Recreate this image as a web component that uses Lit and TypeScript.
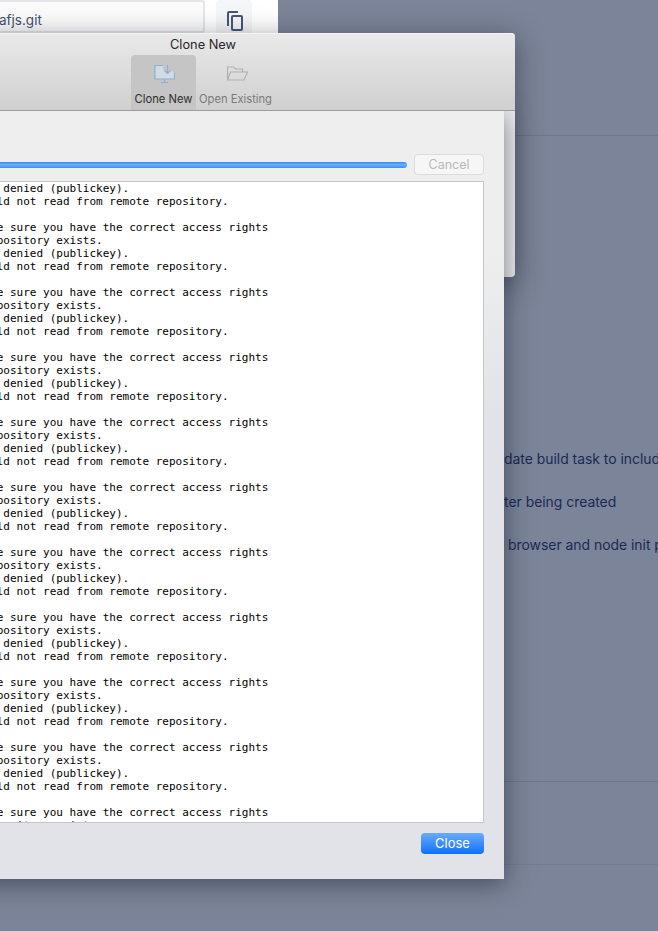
import { LitElement, html, css } from "lit";
import { customElement } from "lit/decorators.js";

const BLOCK = [
  "Please make sure you have the correct access rights",
  "and the repository exists.",
  "Permission denied (publickey).",
  "fatal: Could not read from remote repository.",
  "",
];
const LOG = [
  "Permission denied (publickey).",
  "fatal: Could not read from remote repository.",
  "",
  ...Array.from({ length: 10 }, () => BLOCK).flat(),
].join("\n");

@customElement("app-root")
export class AppRoot extends LitElement {
  static styles = css`
    :host {
      display: block;
      position: relative;
      width: 658px;
      height: 931px;
      overflow: hidden;
      background: #7b8498;
      font-family: "Inter", "Liberation Sans", sans-serif;
    }
    .page {
      display: flex;
      flex-direction: column;
      height: 931px;
    }
    .top {
      height: 33px;
      flex: none;
      box-sizing: border-box;
      background: #fff;
      display: flex;
      gap: 11px;
      margin-left: -20px;
      width: 298px;
    }
    .input {
      width: 225px;
      height: 33px;
      box-sizing: border-box;
      border: 2px solid #e4e6ea;
      border-radius: 3px;
      background: #fbfbfb;
      color: #42506e;
      font-size: 13.5px;
      line-height: 36px;
      padding-left: 17px;
      white-space: nowrap;
      overflow: hidden;
    }
    .copy {
      width: 36px;
      height: 33px;
      border-radius: 4px 4px 0 0;
      background: #f5f6f7;
      display: flex;
      justify-content: center;
      padding: 11px 0 0 2px;
      box-sizing: border-box;
    }
    .sec1 {
      height: 102px;
      flex: none;
      border-bottom: 1px solid #6d768c;
    }
    .sec2 {
      height: 646px;
      flex: none;
      box-sizing: border-box;
      padding-top: 302px;
      border-bottom: 1px solid #6d768c;
      color: #1b2a52;
      font-size: 13.9px;
      white-space: nowrap;
      overflow: hidden;
    }
    .row {
      height: 43px;
      line-height: 43px;
      padding-left: 504px;
    }
    .row.in {
      padding-left: 508px;
    }
    .sec3 {
      height: 82px;
      flex: none;
      border-bottom: 1px solid #737c91;
    }
    .window {
      position: absolute;
      left: -109px;
      top: 33px;
      width: 624px;
      height: 244px;
      border-radius: 4px;
      background: #eeeeee;
      box-shadow: 0 6px 28px rgba(20, 25, 40, 0.5);
      overflow: hidden;
    }
    .bar {
      position: relative;
      z-index: 2;
      height: 78px;
      box-sizing: border-box;
      background: linear-gradient(#e9e9e9, #d0d0d0);
      border-top: 1px solid #f4f4f4;
      border-bottom: 1px solid #9d9d9d;
      display: flex;
      flex-direction: column;
      align-items: center;
    }
    .title {
      font-size: 12.8px;
      line-height: 16px;
      margin-top: 3px;
      color: #26262a;
    }
    .tabs {
      display: flex;
      margin-top: 2px;
    }
    .tab {
      height: 55px;
      box-sizing: border-box;
      padding-top: 8px;
      display: flex;
      flex-direction: column;
      align-items: center;
      font-size: 11.2px;
      line-height: 14px;
      color: #7a7a7a;
    }
    .tab svg {
      height: 22px;
      margin-bottom: 7px;
    }
    .tab.on {
      width: 65px;
      background: #c5c5c5;
      border-radius: 4px 4px 0 0;
      color: #2e2e2e;
    }
    .tab.off {
      width: 79px;
    }
    .sheet {
      position: absolute;
      z-index: 1;
      left: -100px;
      top: 111px;
      width: 604px;
      height: 768px;
      box-sizing: border-box;
      padding: 43px 20px 25px 20px;
      background: linear-gradient(#eeeeee 0%, #eeeeee 18%, #e1e3e8 40%, #e1e3e8 100%);
      box-shadow: 0 4px 24px rgba(20, 25, 40, 0.55);
      display: flex;
      flex-direction: column;
    }
    .progress {
      display: flex;
      align-items: center;
      gap: 7px;
      height: 21px;
      margin-bottom: 6px;
    }
    .track {
      flex: 1;
      height: 6px;
      margin-top: 1px;
      border-radius: 3px;
      background: linear-gradient(#2f86f5, #6cb0fb 45%, #3a8ff6);
    }
    .cancel {
      width: 70px;
      height: 21px;
      box-sizing: border-box;
      border: 1px solid #dcdcdc;
      border-radius: 4px;
      background: #f6f6f6;
      color: #b9b9b9;
      font-size: 12.5px;
      line-height: 19px;
      text-align: center;
    }
    .log {
      flex: 1;
      min-height: 0;
      box-sizing: border-box;
      background: #fff;
      border: 1px solid #c6c6c6;
      overflow: hidden;
      margin: 0;
      padding: 0 0 0 9.5px;
      font-family: "DejaVu Sans Mono", monospace;
      font-size: 11px;
      line-height: 13px;
      color: #000;
    }
    .foot {
      display: flex;
      justify-content: flex-end;
      padding-top: 10px;
    }
    .close {
      width: 63px;
      height: 21px;
      border-radius: 4px;
      background: linear-gradient(#69abfb, #0f70fb);
      color: #fff;
      font-size: 13px;
      line-height: 21px;
      text-align: center;
    }
  `;

  render() {
    return html`
      <div class="page">
        <div class="top">
          <div class="input">afjs.git</div>
          <div class="copy">
            <svg width="16" height="20" viewBox="0 0 16 20" fill="none" stroke="#475778" stroke-width="2">
              <path d="M11 1H2a1 1 0 0 0-1 1v13" />
              <rect x="5" y="5" width="10" height="14" rx="1" />
            </svg>
          </div>
        </div>
        <div class="sec1"></div>
        <div class="sec2">
          <div class="row">date build task to include the thing</div>
          <div class="row">ter being created</div>
          <div class="row in">browser and node init process</div>
        </div>
        <div class="sec3"></div>
      </div>
      <div class="window">
        <div class="bar">
          <div class="title">Clone New</div>
          <div class="tabs">
            <div class="tab on">
              <svg width="22" height="22" viewBox="0 0 22 22" fill="none" stroke="#8db0d4" stroke-width="1.2">
                <path d="M2 2h8v4l4.500 5 3.500-3.500 3.500 2V16H2z" fill="#d2dbe3" stroke="none" />
                <path d="M10 2.500H2V16h19.500V9.500" />
                <path d="M11.500 16v3M8 19.500h7" />
                <path d="M14.500 2v8.500M11.500 7.500l3 3 3-3" />
              </svg>
              Clone New
            </div>
            <div class="tab off">
              <svg width="24" height="22" viewBox="0 0 24 22" fill="none" stroke="#b0b0b0" stroke-width="1.2">
                <path d="M3.500 17V4h6l2 2h7v3" />
                <path d="M3.500 17l3-8h17l-3.500 8z" />
              </svg>
              Open Existing
            </div>
          </div>
        </div>
      </div>
      <div class="sheet">
        <div class="progress">
          <div class="track"></div>
          <div class="cancel">Cancel</div>
        </div>
        <pre class="log">${LOG}</pre>
        <div class="foot"><div class="close">Close</div></div>
      </div>
    `;
  }
}
